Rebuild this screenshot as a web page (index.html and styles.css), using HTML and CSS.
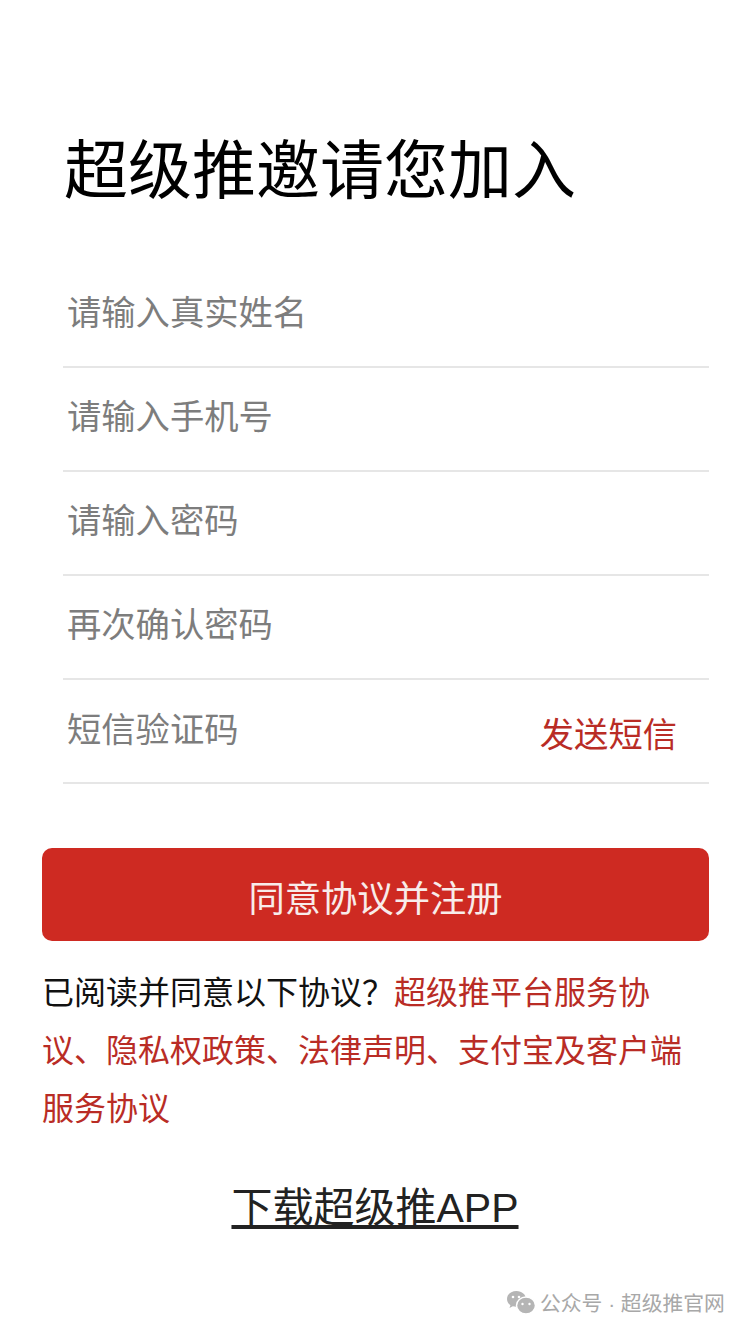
FILE: index.html
```html
<!DOCTYPE html>
<html lang="zh-CN">
<head>
  <meta charset="UTF-8"/>
  <title>超级推</title>
  <link rel="stylesheet" href="styles.css">
</head>
<body>
  <h1 class="title">超级推邀请您加入</h1>
  <div class="form">
    <div class="field">请输入真实姓名</div>
    <div class="field">请输入手机号</div>
    <div class="field">请输入密码</div>
    <div class="field">再次确认密码</div>
    <div class="field field-sms">短信验证码<a class="sms" href="#">发送短信</a></div>
  </div>
  <a class="btn" href="#">同意协议并注册</a>
  <p class="terms">已阅读并同意以下协议？<span class="red">超级推平台服务协议、隐私权政策、法律声明、支付宝及客户端服务协议</span></p>
  <a class="download" href="#">下载超级推APP</a>
  <div class="mark">
    <svg width="30" height="25" viewBox="0 0 30 25">
      <path d="M10.5 1C5 1 1 4.500 1 9c0 2.600 1.300 4.700 3.400 6.200L3.500 18l3.300-1.700c1.100.3 2.300.5 3.700.5 5.500 0 9.500-3.500 9.500-7.800S16 1 10.500 1z" fill="#b5b5b5"/>
      <ellipse cx="20" cy="15.500" rx="9.500" ry="8.500" fill="#b5b5b5" stroke="#fff" stroke-width="1.500"/>
      <circle cx="7" cy="7" r="1.300" fill="#fff"/>
      <circle cx="13" cy="7" r="1.300" fill="#fff"/>
      <circle cx="16.500" cy="14" r="1.200" fill="#fff"/>
      <circle cx="23.500" cy="14" r="1.200" fill="#fff"/>
    </svg>
    <span>公众号 · 超级推官网</span>
  </div>
</body>
</html>
```

FILE: styles.css
```css
body { margin: 0; height: 1334px; position: relative; overflow: hidden; background: #fff; font-family: "Liberation Sans", "Noto Sans CJK SC", sans-serif; }
.title { margin: 0; padding: 133px 0 0 64px; font-size: 64px; line-height: 76px; font-weight: 400; color: #000; }
.form { margin: 0 41px 0 63px; padding-top: 55px; }
.field { height: 102px; border-bottom: 2px solid #e6e6e6; padding-left: 4px; font-size: 34.3px; line-height: 98px; color: #7d7d7d; display: flex; justify-content: space-between; }
.field-sms { line-height: 100px; }
.sms { color: #b92c25; text-decoration: none; padding-right: 32px; line-height: 110px; }
.btn { display: block; margin: 64px 41px 0 42px; height: 88px; padding-top: 5px; line-height: 94px; border-radius: 10px; background: #ce2a22; color: #f8ecea; font-size: 36.3px; text-align: center; text-decoration: none; }
.terms { margin: 23px 60px 0 42px; font-size: 32px; line-height: 58px; color: #111; }
.red { color: #b92c25; }
.download { display: block; margin-top: 40px; text-align: center; font-size: 41px; line-height: 60px; color: #222; }
.mark { position: absolute; left: 506px; top: 1287px; display: flex; align-items: center; gap: 4px; font-size: 20.8px; color: #a8a8a8; }
```
